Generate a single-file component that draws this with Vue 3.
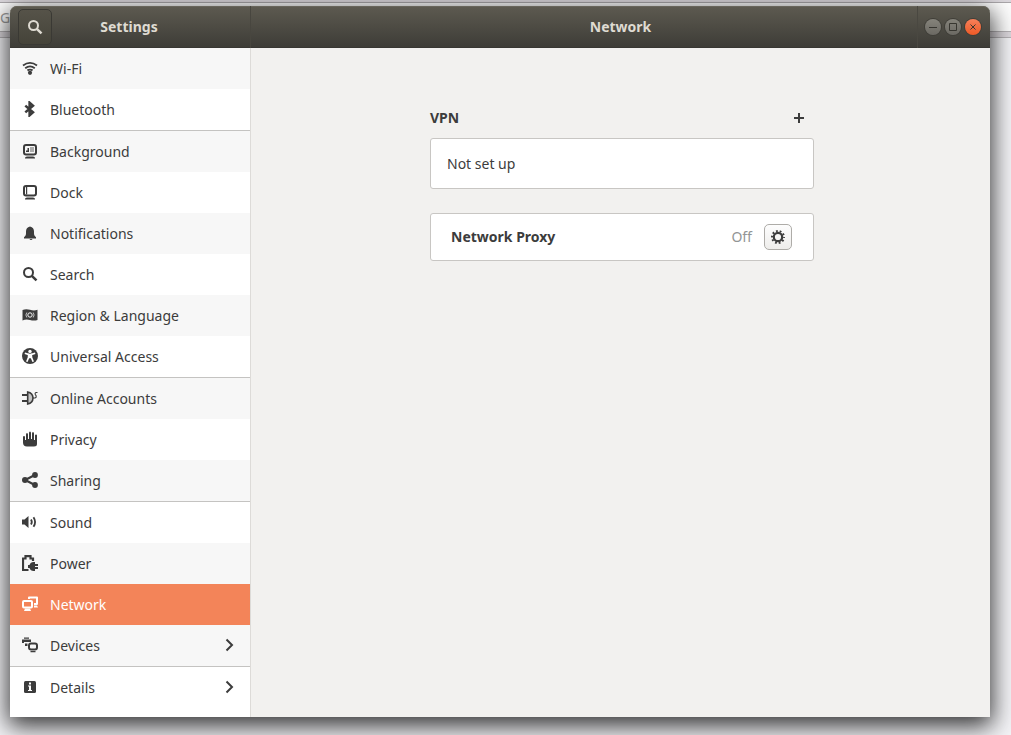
<script setup>
import { ref } from 'vue'

const selected = ref('Network')

const items = [
  { name: 'Wi-Fi', icon: 'wifi' },
  { name: 'Bluetooth', icon: 'bluetooth', end: true },
  { name: 'Background', icon: 'background' },
  { name: 'Dock', icon: 'dock' },
  { name: 'Notifications', icon: 'bell' },
  { name: 'Search', icon: 'search' },
  { name: 'Region & Language', icon: 'flag' },
  { name: 'Universal Access', icon: 'access', end: true },
  { name: 'Online Accounts', icon: 'plug' },
  { name: 'Privacy', icon: 'hand' },
  { name: 'Sharing', icon: 'share', end: true },
  { name: 'Sound', icon: 'sound' },
  { name: 'Power', icon: 'power' },
  { name: 'Network', icon: 'network' },
  { name: 'Devices', icon: 'devices', end: true, more: true },
  { name: 'Details', icon: 'info', more: true },
]

const icons = {
  wifi: '<path d="M1 5.400Q8 .4 15 5.400M3.200 8.200Q8 4.600 12.800 8.200M5.400 10.400Q8 8.800 10.600 10.400" fill="none" stroke="currentColor" stroke-width="1.900"/><circle cx="8" cy="12.800" r="2.100"/>',
  bluetooth: '<path d="M3.300 4.600L11 11.300L7.600 14.300V1.700L11 4.700L3.300 11.400" fill="none" stroke="currentColor" stroke-width="2.500"/>',
  background: '<rect x="2" y="2" width="12" height="9.500" rx="2" fill="none" stroke="currentColor" stroke-width="2"/><path d="M3 15q0-1.500 2-1.500h6q2 0 2 1.500v.5H3z"/><path d="M4 9V7.500h1.500V5H7v4z"/><path d="M8 4h4v5H8z" opacity=".4"/>',
  dock: '<rect x="2" y="2" width="12" height="9.500" rx="2" fill="none" stroke="currentColor" stroke-width="2"/><path d="M3 15q0-1.500 2-1.500h6q2 0 2 1.500v.5H3zM4 3h1.200v7.500H4z"/>',
  bell: '<path d="M8 1.500C5.200 2 4 4 4 6.500v2C4 10.500 3 11 2 12.200V13.500h12v-1.300c-1-1.200-2-1.700-2-3.700v-2C12 4 10.800 2 8 1.500zM7.500 14h3q-.3 1-1.500 1T7.500 14z"/>',
  search: '<circle cx="6.500" cy="6.500" r="4.500" fill="none" stroke="currentColor" stroke-width="2"/><path d="M9.800 9.800L14.500 14.300" stroke="currentColor" stroke-width="2.500"/>',
  flag: '<path d="M.5 3Q4 1.600 8 2.800T15.500 2.800V13Q12 14.200 8 13T.5 13.500z"/><g fill="none" stroke="#f7f7f7"><circle cx="8" cy="8" r="2.200"/><path d="M4.800 5.500Q3 8 4.800 10.500M11.200 5.500Q13 8 11.200 10.500" stroke-width=".7"/></g>',
  access: '<circle cx="8" cy="8" r="8"/><circle cx="8" cy="3.400" r="1.700" fill="#fff"/><path d="M2.800 5.200L6.600 6.400v3L4.800 13.800M13.200 5.200L9.400 6.400v3l1.800 4.400" fill="none" stroke="#fff" stroke-width="1.700"/><path d="M6 5.700h4l-.2 4.500H6.200z" fill="#fff"/>',
  plug: '<path d="M0 4h5v2H0zM0 10h5v2H0z"/><path d="M5.700 2v12Q10.800 13 11 8Q10.800 3 5.700 2z" fill="#c4c4c4" stroke="currentColor" stroke-width="1.600"/><path d="M15.500 2.500h-1.300q-1.400.3-1 1.700l1 1.800q.3 1.600-1.200 2H11" fill="none" stroke="currentColor" stroke-width="1.100"/>',
  hand: '<path d="M1 6q0-1 1-1t1 1v3h1V3.500Q4 2 5 2t1 1.500V8h1V2q0-1.500 1-1.500T9 2v6h1V2.500Q10 1 11 1t1 1.500V9h1V4.500q0-1 1-1t1 1V13q0 2.500-3 2.500H5q-4 0-4-4z"/>',
  share: '<path d="M12.800 3L3.200 8L12.800 13" fill="none" stroke="currentColor" stroke-width="2.200"/><circle cx="13" cy="3" r="2.900"/><circle cx="3" cy="8" r="3"/><circle cx="13" cy="13" r="2.900"/>',
  sound: '<path d="M0 5.500h2.500L6.500 2v12L2.500 10.500H0z"/><path d="M9 5.500q1.600 2.500 0 5M11.500 3.200q3.200 4.800 0 9.600" fill="none" stroke="currentColor" stroke-width="1.800"/>',
  power: '<path d="M6.500 15H1V3.500h2.500V1.200h5V3.500H11V6" fill="none" stroke="currentColor" stroke-width="2.200"/><path d="M6 10h1.500q1-3 4-3H13v2h3v2h-3v1h3v2h-3v2h-1.500q-3 0-4-3H6z"/>',
  network: '<rect x="1" y="5" width="9" height="6.500" rx="1" fill="none" stroke="currentColor" stroke-width="2"/><path d="M3 12.500h5l1 2.500H2zM6 3V1.500Q6 .5 7 .5h8q1 0 1 1V8q0 1-1 1h-3V7h2V2.500H8V3zM12 9.500h3l1 2h-4z"/>',
  devices: '<path d="M2 .5h5v1.300H2zM0 2.500h9V5H2v1H0zM3 6.500h2.500V9H3zM8.500 14h5v1.300h-5z"/><rect x="7" y="6.500" width="8" height="6" rx="2" fill="none" stroke="currentColor" stroke-width="2"/>',
  info: '<rect x="2" y="2" width="12" height="12" rx="1.500"/><path d="M7 3.500h2v2H7zM6 6.500h3V11h1v1H6v-1h1V7.500H6z" fill="#fff"/>',
}
</script>

<template>
  <div class="desktop">
    <div class="behind" aria-hidden="true">
      <div class="behind-bar">G</div>
    </div>
    <div class="window">
      <header class="titlebar">
        <div class="title-side">
          <button class="find" type="button" aria-label="Search">
            <svg viewBox="0 0 16 16" width="16" height="16" fill="currentColor" v-html="icons.search"></svg>
          </button>
          <h1>Settings</h1>
        </div>
        <div class="title-main">
          <h2>Network</h2>
          <div class="controls">
            <button type="button" aria-label="Minimize">
              <svg viewBox="0 0 16 16"><path d="M4 8.500h8" /></svg>
            </button>
            <button type="button" aria-label="Maximize">
              <svg viewBox="0 0 16 16"><path d="M4.500 4.500h7v7h-7z" /></svg>
            </button>
            <button class="close" type="button" aria-label="Close">
              <svg viewBox="0 0 16 16"><path d="M5.500 5.500l5 5M10.500 5.500l-5 5" /></svg>
            </button>
          </div>
        </div>
      </header>
      <div class="body">
        <nav class="sidebar">
          <button
            v-for="item in items"
            :key="item.name"
            type="button"
            class="row"
            :class="{ end: item.end, selected: item.name === selected }"
            @click="selected = item.name"
          >
            <svg viewBox="0 0 16 16" width="16" height="16" fill="currentColor" v-html="icons[item.icon]"></svg>
            <span>{{ item.name }}</span>
            <svg v-if="item.more" class="chevron" viewBox="0 0 16 16" width="16" height="16">
              <path d="M4.500 2.500L10 8l-5.500 5.500" />
            </svg>
          </button>
        </nav>
        <main class="content">
          <div class="panel">
            <div class="heading">
              <h3>VPN</h3>
              <button class="add" type="button" aria-label="Add VPN">
                <svg viewBox="0 0 10 10" width="10" height="10" fill="currentColor"><path d="M4 0h2v4h4v2H6v4H4V6H0V4h4z" /></svg>
              </button>
            </div>
            <div class="card vpn">Not set up</div>
            <div class="card proxy">
              <h3>Network Proxy</h3>
              <span class="status">Off</span>
              <button class="gear" type="button" aria-label="Network proxy options">
                <svg viewBox="0 0 16 16" width="16" height="16">
                  <circle cx="8" cy="8" r="6" fill="none" stroke="currentColor" stroke-width="2" stroke-dasharray="1.800 1.970" stroke-dashoffset=".9" />
                  <circle cx="8" cy="8" r="4.200" fill="none" stroke="currentColor" stroke-width="2.200" />
                </svg>
              </button>
            </div>
          </div>
        </main>
      </div>
    </div>
  </div>
</template>

<style>
body {
  margin: 0;
  background: #f4f4f7;
}
</style>

<style scoped>
.desktop {
  position: relative;
  box-sizing: border-box;
  min-height: 100vh;
  padding: 6px 21px 18px 10px;
  display: flex;
  overflow: hidden;
  font-family: "Noto Sans", "Open Sans", sans-serif;
  font-size: 14px;
  line-height: 20px;
  color: #3c3c3c;
}
.behind {
  position: absolute;
  inset: 0;
  box-sizing: border-box;
  padding-top: 2px;
  background: linear-gradient(#dcd8dd 0 37px, #b5b2b5 37px 38px, #f4f4f7 38px);
}
.behind-bar {
  height: 28px;
  border-top: 1px solid #aaa7aa;
  border-bottom: 1px solid #b5b2b5;
  background: #fdfdfd;
  color: #999;
  line-height: 30px;
}
.window {
  position: relative;
  flex: 1;
  display: flex;
  flex-direction: column;
  border-radius: 7px 7px 0 0;
  box-shadow: 0 7px 24px 2px rgba(0, 0, 0, 0.8);
  background: #f2f1ef;
}
button {
  font: inherit;
  color: inherit;
  border: 0;
  padding: 0;
  margin: 0;
  background: none;
}
h1,
h2,
h3 {
  margin: 0;
  font-size: 14px;
  line-height: 20px;
  font-weight: 700;
}
.titlebar {
  display: flex;
  height: 42px;
  border-radius: 7px 7px 0 0;
  background: linear-gradient(#5d5a50, #3d3c37);
  box-shadow: inset 0 1px #68655b, inset 0 -1px #383733;
  color: #dfdbd2;
}
.title-side {
  box-sizing: border-box;
  width: 241px;
  flex: none;
  display: flex;
  align-items: center;
  padding: 0 44px 0 8px;
  border-right: 1px solid #48463f;
}
.title-side h1 {
  flex: 1;
  text-align: center;
}
.find {
  box-sizing: border-box;
  width: 34px;
  height: 36px;
  display: grid;
  place-items: center;
  border: 1px solid #3a3934;
  border-radius: 5px;
  background: linear-gradient(#565349, #454339);
}
.title-main {
  flex: 1;
  display: grid;
  grid-template-columns: 73px 1fr 73px;
  align-items: center;
}
.title-main h2 {
  grid-column: 2;
  text-align: center;
}
.controls {
  box-sizing: border-box;
  height: 42px;
  display: flex;
  align-items: center;
  justify-content: flex-end;
  gap: 4px;
  padding-right: 9px;
  border-left: 1px solid #4a4841;
}
.controls button {
  width: 16px;
  height: 16px;
  border-radius: 50%;
  background: linear-gradient(#85837b, #6b6963);
  box-shadow: 0 0 0 1px #3f3e38;
}
.controls .close {
  background: linear-gradient(#f7805a, #ee5a26);
}
.controls svg {
  display: block;
  width: 16px;
  height: 16px;
  fill: none;
  stroke: #373630;
  stroke-width: 1;
}
.body {
  flex: 1;
  display: flex;
}
.sidebar {
  width: 240px;
  flex: none;
  background: #fff;
  border-right: 1px solid #dddbd8;
}
.row {
  box-sizing: content-box;
  width: 100%;
  height: 41px;
  display: flex;
  align-items: center;
  text-align: left;
}
.row > svg {
  flex: none;
  margin: 0 12px 2px;
}
.row span {
  flex: 1;
}
.row:nth-child(odd) {
  background: #f7f7f7;
}
.row.end {
  border-bottom: 1px solid #c4c3c1;
}
.row.selected {
  background: #f38459;
  color: #fff;
}
.chevron {
  fill: none;
  stroke: currentColor;
  stroke-width: 2;
}
.content {
  flex: 1;
  display: flex;
  justify-content: center;
  padding: 60px 20px 20px 23px;
}
.panel {
  width: 100%;
  max-width: 384px;
}
.heading {
  display: flex;
  align-items: center;
  justify-content: space-between;
  padding-right: 10px;
  margin-bottom: 10px;
}
.add,
.add svg {
  display: block;
}
.card {
  box-sizing: border-box;
  border: 1px solid #c8c6c3;
  border-radius: 3px;
  background: #fff;
}
.vpn {
  padding: 15px 16px;
  margin-bottom: 24px;
  line-height: 19px;
}
.proxy {
  display: flex;
  align-items: center;
  padding: 10px 21px 10px 20px;
}
.proxy h3 {
  flex: 1;
}
.status {
  color: #929595;
  margin-right: 12px;
}
.gear {
  box-sizing: border-box;
  width: 28px;
  height: 26px;
  display: grid;
  place-items: center;
  border: 1px solid #aeaca8;
  border-radius: 5px;
  background: linear-gradient(#fdfdfd, #eeedeb);
}
</style>
